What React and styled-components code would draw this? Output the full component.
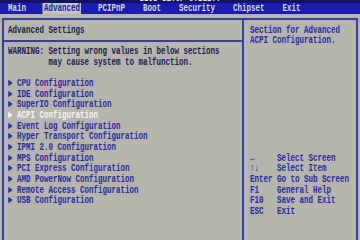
import React from 'react'
import styled, { createGlobalStyle } from 'styled-components'

const ROW = 10.667

const tabs = ['Main', 'Advanced', 'PCIPnP', 'Boot', 'Security', 'Chipset', 'Exit']

const items = [
  'CPU Configuration',
  'IDE Configuration',
  'SuperIO Configuration',
  'ACPI Configuration',
  'Event Log Configuration',
  'Hyper Transport Configuration',
  'IPMI 2.0 Configuration',
  'MPS Configuration',
  'PCI Express Configuration',
  'AMD PowerNow Configuration',
  'Remote Access Configuration',
  'USB Configuration',
]

const keys = [
  ['\u2194', 'Select Screen'],
  ['\u2191\u2193', 'Select Item'],
  ['Enter', 'Go to Sub Screen'],
  ['F1', 'General Help'],
  ['F10', 'Save and Exit'],
  ['ESC', 'Exit'],
]

function App() {
  return (
    <Screen>
      <Global />
      <TitleBar>
        <TitleRow>
          <Glyphs>BIOS SETUP UTILITY</Glyphs>
        </TitleRow>
      </TitleBar>
      <TabBar>
        {tabs.map((t) => (
          <Tab key={t} $active={t === 'Advanced'}>
            <Glyphs>{t}</Glyphs>
          </Tab>
        ))}
      </TabBar>
      <Body>
        <Frame>
          <MainPanel>
            <Row $color="#1c1c4c">
              <Glyphs>Advanced Settings</Glyphs>
            </Row>
            <Separator />
            <Row $color="#1c1c4c">
              <Glyphs>WARNING: Setting wrong values in below sections</Glyphs>
            </Row>
            <Row $color="#1c1c4c" $indent={9}>
              <Glyphs>may cause system to malfunction.</Glyphs>
            </Row>
            <Row />
            {items.map((it) => (
              <Row key={it} $color={it.startsWith('ACPI') ? '#f4f4f4' : '#2a2aa2'}>
                <Glyphs>{'\u25BA ' + it}</Glyphs>
              </Row>
            ))}
          </MainPanel>
          <HelpPanel>
            <Row $color="#2a2aa2">
              <Glyphs>Section for Advanced</Glyphs>
            </Row>
            <Row $color="#2a2aa2">
              <Glyphs>ACPI Configuration.</Glyphs>
            </Row>
            <KeyList>
              {keys.map(([k, d]) => (
                <Row key={k} $color="#2a2aa2">
                  <KeyName>
                    <Glyphs>{k}</Glyphs>
                  </KeyName>
                  <Glyphs>{d}</Glyphs>
                </Row>
              ))}
            </KeyList>
          </HelpPanel>
        </Frame>
      </Body>
    </Screen>
  )
}

export default App

const Global = createGlobalStyle`
body{
    margin:0;
    background:#b5b5ad;
    overflow:hidden;
}
`
const Screen = styled.div`
width:360px;
height:240px;
overflow:hidden;
display:flex;
flex-direction:column;
background:#b5b5ad;
font-family:"Liberation Mono", "DejaVu Sans Mono", monospace;
font-size:7.5px;
font-weight:bold;
line-height:${ROW}px;
`
const Glyphs = styled.span`
display:inline-block;
white-space:pre;
transform:scaleY(1.45);
`
const TitleBar = styled.div`
height:3.33px;
flex:none;
overflow:hidden;
background:#12125e;
`
const TitleRow = styled.div`
height:${ROW}px;
margin-top:-7.33px;
text-align:center;
color:#f0f0f0;
`
const TabBar = styled.div`
height:${ROW}px;
flex:none;
display:flex;
gap:18px;
padding-left:8px;
background:#1c1cb0;
`
const Tab = styled.div`
height:${ROW}px;
color:${(p) => (p.$active ? '#1c1cb0' : '#d4d4e0')};
background:${(p) => (p.$active ? '#c4c4c0' : 'transparent')};
box-shadow:${(p) => (p.$active ? '-1.5px 0 0 #c4c4c0, 1px 0 0 #c4c4c0' : 'none')};
`
const Body = styled.div`
flex:1;
padding:4.3px 2px 0 2px;
`
const Frame = styled.div`
height:260px;
display:grid;
grid-template-columns:240px 1fr;
border:2px solid #3c3ca8;
`
const MainPanel = styled.div`
padding:4.4px 0 0 4px;
border-right:2px solid #3c3ca8;
`
const HelpPanel = styled.div`
padding:4.4px 0 0 6px;
`
const Row = styled.div`
height:${ROW}px;
display:flex;
padding-left:${(p) => (p.$indent || 0) * 4.5}px;
color:${(p) => p.$color || '#2a2aa2'};
`
const Separator = styled.div`
height:2px;
margin:4.33px 0 4.33px -4px;
background:#3c3ca8;
`
const KeyList = styled.div`
margin-top:${ROW * 10}px;
`
const KeyName = styled.div`
width:27px;
flex:none;
`
